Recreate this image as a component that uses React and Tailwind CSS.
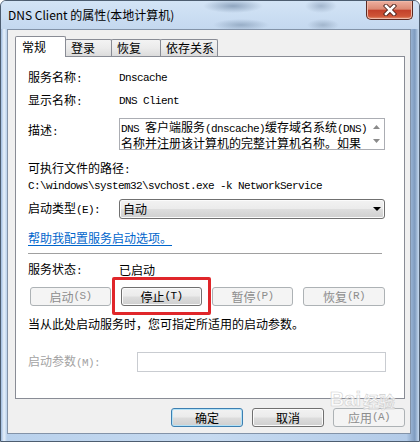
import React from 'react';

// half-width ascii in the SimSun look: 6px per char
const A = ({ children }) => (
  <span className="font-['Liberation_Mono',monospace] text-[11px] tracking-[-0.6px]">{children}</span>
);

const btnBase = 'h-[19px] flex items-center justify-center rounded-[3px] border text-[12px] leading-none';
const btnNormal = `${btnBase} border-[#707070] bg-[linear-gradient(#f2f2f2_0%,#ebebeb_48%,#dddddd_52%,#cfcfcf_100%)] shadow-[inset_0_0_0_1px_#fbfbfb] text-black`;
const btnDefault = `${btnBase} border-[#3c7fb1] bg-[linear-gradient(#f2f2f2_0%,#ebebeb_48%,#dddddd_52%,#cfcfcf_100%)] shadow-[inset_0_0_0_1px_#b4e2f7] text-black`;
const btnDisabled = `${btnBase} border-[#adb2b5] bg-[#f4f4f4] text-[#8d8d8d]`;

const tabOff = 'h-[17px] -ml-px pl-[5px] leading-[16px] border border-b-0 border-[#898c95] rounded-t-[2px] bg-[linear-gradient(#f3f3f3_0%,#ebebeb_50%,#dcdcdc_100%)]';

const Row = ({ label, children, className = '' }) => (
  <div className={`flex h-[16px] items-center leading-[16px] ${className}`}>
    <div className="w-[91px]">{label}</div>
    {children}
  </div>
);

export default function App() {
  return (
    <div className="w-[420px] h-[442px] relative overflow-hidden flex flex-col border border-[#4d5d70] rounded-t-[6px] bg-[linear-gradient(90deg,#9fbce0_0px,#e6f0fa_3px,#b9d1ec_6px,#c6daf0_50%,#b3cbe8_97%,#7f9cc0_99%,#c6daf0_100%)] font-['Noto_Sans_CJK_SC',sans-serif] text-[12px] text-black">
      {/* Title bar */}
      <div className="h-[28px] flex items-center pl-[7px] bg-[radial-gradient(ellipse_30px_7px_at_232px_5px,#8fa5bf,transparent),radial-gradient(ellipse_28px_6px_at_240px_24px,#98aec7,transparent),radial-gradient(ellipse_16px_7px_at_320px_5px,#a2b6cd,transparent),radial-gradient(ellipse_16px_6px_at_322px_24px,#a2b6cd,transparent),linear-gradient(#d3e4f6,#c4d8ef)]">
        <span className="leading-none">DNS Client 的属性(本地计算机)</span>
      </div>

      {/* Close button */}
      <div className="absolute top-0 right-[6px] w-[47px] h-[19px] flex items-center justify-center border border-t-0 border-[#5b2a22] rounded-b-[5px] bg-[linear-gradient(#eeb0a0_0%,#dc8a74_45%,#c3412b_52%,#cf5538_85%,#e59a78_100%)] shadow-[inset_0_0_0_1px_#f0b9a8]">
        <svg width="14" height="12" viewBox="0 0 14 12">
          <path d="M3 2 L11 10 M11 2 L3 10" stroke="#4a2018" strokeWidth="4.4" strokeLinecap="square" />
          <path d="M3 2 L11 10 M11 2 L3 10" stroke="#ffffff" strokeWidth="2.6" strokeLinecap="square" />
        </svg>
      </div>

      <div className="flex-1 flex pl-[6px] pr-[8px] pb-[7px]">
        <div className="flex-1 flex flex-col bg-[#f0f0f0] border border-[#8393a8] pl-[7px] pr-[5px] pt-[6px]">
          {/* Tabs */}
          <div className="flex items-end h-[20px]">
            <div className="relative z-10 w-[51px] h-[21px] -mb-px pl-[6px] pt-[2px] leading-[16px] bg-white border border-b-0 border-[#898c95] rounded-t-[2px]">
              常规
            </div>
            <div className={`${tabOff} w-[47px]`}>登录</div>
            <div className={`${tabOff} w-[50px]`}>恢复</div>
            <div className={`${tabOff} w-[58px]`}>依存关系</div>
          </div>

          {/* Panel */}
          <div className="h-[343px] bg-white border border-[#898c95] pl-[12px] pt-[13px] flex flex-col">
            <Row label={<>服务名称<A>:</A></>}>
              <A>Dnscache</A>
            </Row>
            <Row label={<>显示名称<A>:</A></>} className="mt-[7px]">
              <A>DNS Client</A>
            </Row>

            <div className="mt-[9px] flex items-start">
              <div className="w-[91px] pt-[4px] leading-[16px]">
                描述<A>:</A>
              </div>
              <div className="w-[266px] h-[32px] flex border border-[#abadb3] bg-white">
                <div className="flex-1 pl-[1px] pt-[1px] leading-[13px] whitespace-nowrap">
                  <div>
                    <A>DNS </A>客户端服务<A>(dnscache)</A>缓存域名系统<A>(DNS)</A>
                  </div>
                  <div>名称并注册该计算机的完整计算机名称。如果</div>
                </div>
                <div className="w-[16px] flex flex-col items-center justify-between py-[6px]">
                  <svg width="7" height="4" viewBox="0 0 7 4">
                    <path d="M0 4 L3.5 0 L7 4 Z" fill="#8a8a8a" />
                  </svg>
                  <svg width="7" height="4" viewBox="0 0 7 4">
                    <path d="M0 0 L7 0 L3.5 4 Z" fill="#8a8a8a" />
                  </svg>
                </div>
              </div>
            </div>

            <div className="mt-[10px] h-[16px] leading-[16px]">
              可执行文件的路径<A>:</A>
            </div>
            <div className="h-[16px] leading-[16px]">
              <A>C:\windows\system32\svchost.exe -k NetworkService</A>
            </div>

            <div className="mt-[7px] flex items-center h-[20px]">
              <div className="w-[91px] leading-[16px]">
                启动类型<A>(E):</A>
              </div>
              <div className="w-[266px] h-[20px] flex items-center justify-between pl-[3px] pr-[3px] rounded-[3px] border border-[#707070] bg-[linear-gradient(#f2f2f2_0%,#ebebeb_48%,#dddddd_52%,#cfcfcf_100%)] shadow-[inset_0_0_0_1px_#fbfbfb]">
                <span className="leading-[16px]">自动</span>
                <svg width="8" height="4" viewBox="0 0 8 4">
                  <path d="M0 0 L8 0 L4 4 Z" fill="#000" />
                </svg>
              </div>
            </div>

            <div className="mt-[11px] h-[16px] leading-[16px]">
              <span className="text-[#0066cc] underline underline-offset-2">帮助我配置服务启动选项。</span>
            </div>

            <div className="mt-[7px] h-px w-[354px] bg-[#a0a0a0]" />

            <Row label={<>服务状态<A>:</A></>} className="mt-[8px]">
              <span>已启动</span>
            </Row>

            <div className="mt-[9px] ml-[2px] w-[355px] flex justify-between">
              <div className={`${btnDisabled} w-[81px]`}>
                启动<A>(S)</A>
              </div>
              <div className="relative">
                <div className={`${btnNormal} w-[81px]`}>
                  停止<A>(T)</A>
                </div>
                <div className="absolute -left-[9px] -right-[9px] -top-[10px] -bottom-[9px] border-[3px] border-[#e0262a] rounded-[2px]" />
              </div>
              <div className={`${btnDisabled} w-[81px]`}>
                暂停<A>(P)</A>
              </div>
              <div className={`${btnDisabled} w-[82px]`}>
                恢复<A>(R)</A>
              </div>
            </div>

            <div className="mt-[10px] h-[16px] leading-[16px]">当从此处启动服务时，您可指定所适用的启动参数。</div>

            <div className="mt-[20px] flex items-center h-[20px]">
              <div className="w-[109px] leading-[16px] text-[#a3a3a3]">
                启动参数<A>(M):</A>
              </div>
              <div className="w-[249px] h-[20px] border border-[#c9ccd1] bg-white" />
            </div>
          </div>

          {/* Dialog buttons */}
          <div className="relative mt-[9px] flex justify-end gap-[9px]">
            <div className={`${btnDefault} w-[72px]`}>确定</div>
            <div className={`${btnNormal} w-[72px]`}>取消</div>
            <div className={`${btnDisabled} w-[72px]`}>
              应用<A>(A)</A>
            </div>
            {/* watermark */}
            <div className="absolute right-[10px] -top-[19px] h-[20px] flex items-end gap-[2px] text-white/70 [-webkit-text-stroke:0.6px_#d0d0d0] font-bold leading-none pointer-events-none">
              <span className="font-['Liberation_Sans',sans-serif] text-[20px] leading-none">Bai</span>
              <span className="text-[16px] leading-none">经验</span>
            </div>
          </div>
        </div>
      </div>
    </div>
  );
}
